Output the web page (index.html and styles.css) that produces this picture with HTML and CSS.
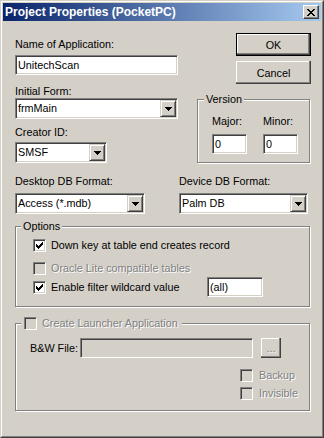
FILE: index.html
```html
<!DOCTYPE html>
<html>
<head>
<meta charset="utf-8">
<link rel="stylesheet" href="styles.css">
</head>
<body>
<div class="window">
  <div class="frame">
    <div class="titlebar">
      <span class="title">Project Properties (PocketPC)</span>
      <div class="close">
        <svg width="8" height="7" viewBox="0 0 8 7" shape-rendering="crispEdges"><path d="M0 0h2v1H0zM6 0h2v1H6zM1 1h2v1H1zM5 1h2v1H5zM2 2h4v1H2zM3 3h2v1H3zM2 4h4v1H2zM1 5h2v1H1zM5 5h2v1H5zM0 6h2v1H0zM6 6h2v1H6z" fill="#000"/></svg>
      </div>
    </div>
    <div class="content">
      <div class="top">
        <div class="col-left">
          <div class="label l1">Name of Application:</div>
          <div class="edit name">UnitechScan</div>
          <div class="label l2">Initial Form:</div>
          <div class="combo initial">
            <span class="val">frmMain</span>
            <span class="drop"><svg width="7" height="4" viewBox="0 0 7 4" shape-rendering="crispEdges"><path d="M0 0h7v1H0zM1 1h5v1H1zM2 2h3v1H2zM3 3h1v1H3z" fill="#000"/></svg></span>
          </div>
          <div class="label l3">Creator ID:</div>
          <div class="combo creator">
            <span class="val">SMSF</span>
            <span class="drop"><svg width="7" height="4" viewBox="0 0 7 4" shape-rendering="crispEdges"><path d="M0 0h7v1H0zM1 1h5v1H1zM2 2h3v1H2zM3 3h1v1H3z" fill="#000"/></svg></span>
          </div>
        </div>
        <div class="col-right">
          <div class="btn default">OK</div>
          <div class="btn cancel">Cancel</div>
          <div class="group version">
            <div class="group-title">Version</div>
            <div class="vgrid">
              <div class="label">Major:</div>
              <div class="label">Minor:</div>
              <div class="edit">0</div>
              <div class="edit">0</div>
            </div>
          </div>
        </div>
      </div>

      <div class="formats">
        <div class="fcol">
          <div class="label">Desktop DB Format:</div>
          <div class="combo desktop">
            <span class="val">Access (*.mdb)</span>
            <span class="drop"><svg width="7" height="4" viewBox="0 0 7 4" shape-rendering="crispEdges"><path d="M0 0h7v1H0zM1 1h5v1H1zM2 2h3v1H2zM3 3h1v1H3z" fill="#000"/></svg></span>
          </div>
        </div>
        <div class="fcol">
          <div class="label">Device DB Format:</div>
          <div class="combo device">
            <span class="val">Palm DB</span>
            <span class="drop"><svg width="7" height="4" viewBox="0 0 7 4" shape-rendering="crispEdges"><path d="M0 0h7v1H0zM1 1h5v1H1zM2 2h3v1H2zM3 3h1v1H3z" fill="#000"/></svg></span>
          </div>
        </div>
      </div>

      <div class="group options">
        <div class="group-title">Options</div>
        <div class="check-row opt1">
          <span class="cb"><svg width="7" height="7" viewBox="0 0 7 7" shape-rendering="crispEdges"><path d="M6 0h1v1H6zM5 1h2v1H5zM0 2h1v1H0zM4 2h3v1H4zM0 3h2v1H0zM3 3h3v1H3zM0 4h5v1H0zM1 5h3v1H1zM2 6h1v1H2z" fill="#000"/></svg></span>
          <span class="lbl">Down key at table end creates record</span>
        </div>
        <div class="check-row opt2">
          <span class="cb disabled"></span>
          <span class="lbl dis">Oracle Lite compatible tables</span>
        </div>
        <div class="check-row opt3">
          <span class="cb"><svg width="7" height="7" viewBox="0 0 7 7" shape-rendering="crispEdges"><path d="M6 0h1v1H6zM5 1h2v1H5zM0 2h1v1H0zM4 2h3v1H4zM0 3h2v1H0zM3 3h3v1H3zM0 4h5v1H0zM1 5h3v1H1zM2 6h1v1H2z" fill="#000"/></svg></span>
          <span class="lbl wide">Enable filter wildcard value</span>
          <div class="edit wildcard">(all)</div>
        </div>
      </div>

      <div class="group launcher">
        <div class="group-title check-title">
          <span class="cb disabled"></span>
          <span class="lbl dis">Create Launcher Application</span>
        </div>
        <div class="bw">
          <span class="bw-label">B&amp;W File:</span>
          <div class="edit bw-edit"></div>
          <div class="btn small"><span class="dis">...</span></div>
        </div>
        <div class="check-row optb">
          <span class="cb disabled"></span>
          <span class="lbl dis">Backup</span>
        </div>
        <div class="check-row opti">
          <span class="cb disabled"></span>
          <span class="lbl dis">Invisible</span>
        </div>
      </div>
    </div>
  </div>
</div>
</body>
</html>
```

FILE: styles.css
```css
* { box-sizing: border-box; margin: 0; padding: 0; }

body {
  margin: 0;
  background: #d4d0c8;
  font-family: "Liberation Sans", Arial, sans-serif;
  font-size: 10.8px;
  color: #000;
}

.window {
  width: 324px;
  height: 438px;
  border: 1px solid;
  border-color: #d4d0c8 #404040 #404040 #d4d0c8;
  background: #d4d0c8;
}

.frame {
  height: 100%;
  border: 1px solid;
  border-color: #fff #808080 #808080 #fff;
  padding: 1px;
  display: flex;
  flex-direction: column;
}

.titlebar {
  height: 18px;
  flex: none;
  background: linear-gradient(to right, #0a246a, #a6caf0);
  display: flex;
  align-items: center;
  justify-content: space-between;
  padding: 0 2px 0 2px;
}

.title {
  color: #fff;
  font-weight: bold;
  font-size: 12px;
  line-height: 18px;
  white-space: nowrap;
}

.close {
  width: 16px;
  height: 14px;
  background: #d4d0c8;
  border: 1px solid;
  border-color: #fff #404040 #404040 #fff;
  box-shadow: inset -1px -1px #808080;
  display: flex;
  align-items: center;
  justify-content: center;
}

.close svg, .drop svg, .cb svg { display: block; }

.content {
  flex: 1;
  padding: 12px 0 0 12px;
}

.label {
  line-height: 12px;
  height: 12px;
  white-space: nowrap;
}

.dis {
  color: #808080;
  text-shadow: 1px 1px 0 #fff;
}

/* sunken edit */
.edit {
  height: 20px;
  border: 1px solid;
  border-color: #808080 #fff #fff #808080;
  box-shadow: inset 1px 1px #404040, inset -1px -1px #d4d0c8;
  background: #fff;
  padding: 0 2px;
  line-height: 18px;
  white-space: nowrap;
  overflow: hidden;
}

/* combo box */
.combo {
  height: 21px;
  display: flex;
  align-items: center;
  border: 1px solid;
  border-color: #808080 #fff #fff #808080;
  box-shadow: inset 1px 1px #404040, inset -1px -1px #d4d0c8;
  background: #fff;
  padding: 1px;
}

.val {
  padding-left: 1px;
  line-height: 17px;
  white-space: nowrap;
}

.drop {
  width: 16px;
  height: 17px;
  margin-left: auto;
  background: #d4d0c8;
  border: 1px solid;
  border-color: #d4d0c8 #404040 #404040 #d4d0c8;
  box-shadow: inset 1px 1px #fff, inset -1px -1px #808080;
  display: flex;
  align-items: center;
  justify-content: center;
  padding-top: 1px;
}

/* buttons */
.btn {
  width: 75px;
  height: 23px;
  display: flex;
  align-items: center;
  justify-content: center;
  background: #d4d0c8;
  box-shadow: inset -1px -1px #404040, inset -2px -2px #808080, inset 1px 1px #fff;
}

.btn.default {
  border: 1px solid #000;
}

/* top section */
.top {
  display: grid;
  grid-template-columns: 163px 114px;
  column-gap: 19px;
}

.col-left, .col-right {
  display: flex;
  flex-direction: column;
  align-items: flex-start;
}

.l1 { margin-top: 5px; }
.name { width: 163px; margin-top: 5px; }
.l2 { margin-top: 10px; }
.initial { width: 163px; margin-top: 1px; }
.l3 { margin-top: 7px; }
.creator { width: 92px; margin-top: 4px; }

.col-right .btn { margin-left: 39px; }
.cancel { margin-top: 5px; }

/* group boxes */
.group {
  border: 1px solid #808080;
  box-shadow: inset 1px 1px #fff, 1px 1px #fff;
}

.group-title {
  margin-top: -7px;
  margin-left: 6px;
  padding: 0 2px;
  background: #d4d0c8;
  line-height: 12px;
  height: 12px;
  width: max-content;
  white-space: nowrap;
}

.version {
  margin-top: 15px;
  width: 113px;
  height: 64px;
}

.vgrid {
  display: grid;
  grid-template-columns: 35px 35px;
  column-gap: 16px;
  row-gap: 7px;
  margin: 10px 0 0 14px;
}

/* formats */
.formats {
  display: grid;
  grid-template-columns: 164px 130px;
  margin-top: 12px;
}

.fcol .combo { margin-top: 6px; }
.desktop { width: 130px; }
.device { width: 129px; }

/* options */
.options {
  margin-top: 12px;
  width: 295px;
  height: 81px;
}

.options .group-title { margin-left: 5px; }

.check-row {
  display: flex;
  align-items: center;
  margin-left: 17px;
}

.cb {
  width: 13px;
  height: 13px;
  flex: none;
  border: 1px solid;
  border-color: #808080 #fff #fff #808080;
  box-shadow: inset 1px 1px #404040, inset -1px -1px #d4d0c8;
  background: #fff;
  display: flex;
  align-items: center;
  justify-content: center;
}

.cb.disabled { background: #d4d0c8; }

.lbl {
  margin-left: 5px;
  line-height: 13px;
  white-space: nowrap;
}

.opt1 { margin-top: 7px; }
.opt2 { margin-top: 10px; }
.opt3 { margin-top: 2px; align-items: flex-start; }
.opt3 .cb { margin-top: 4px; }
.opt3 .lbl { margin-top: 4px; }
.wide { width: 156px; }
.wildcard { width: 56px; }

/* launcher */
.launcher {
  margin-top: 16px;
  width: 295px;
  height: 88px;
}

.check-title {
  display: flex;
  align-items: center;
  height: 13px;
  line-height: 13px;
  margin-left: 5px;
  padding: 0 4px 0 3px;
}

.bw {
  display: flex;
  align-items: center;
  margin: 8px 0 0 14px;
}

.bw-label {
  width: 50px;
  flex: none;
  white-space: nowrap;
}

.bw-edit {
  width: 173px;
  background: #d4d0c8;
}

.btn.small {
  width: 20px;
  height: 20px;
  margin-left: 8px;
  align-items: flex-end;
  padding-bottom: 4px;
  line-height: 11px;
}

.optb { margin: 11px 0 0 224px; }
.opti { margin: 5px 0 0 224px; }
.optb .lbl, .opti .lbl { margin-left: 6px; }
```
